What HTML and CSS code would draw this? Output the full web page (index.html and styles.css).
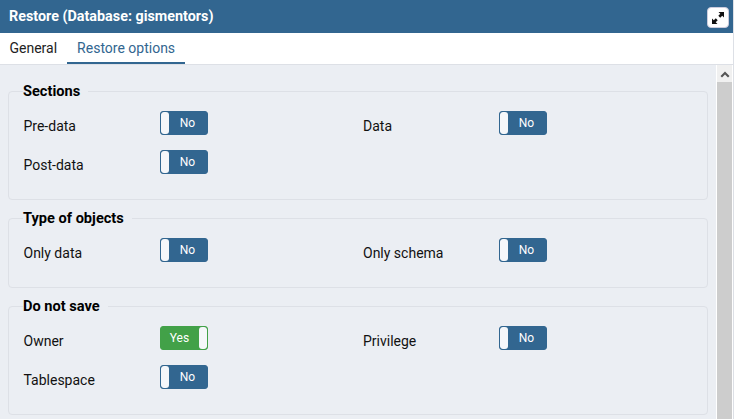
FILE: index.html
```html
<!DOCTYPE html>
<html lang="en">
<head>
<meta charset="utf-8">
<title>Restore</title>
<link rel="stylesheet" href="styles.css">
</head>
<body>
<div class="dialog">
  <header class="titlebar">
    <span class="title">Restore (Database: gismentors)</span>
    <button class="expand" aria-label="Maximize">
      <svg width="14" height="14" viewBox="0 0 14 14"><path d="M7.500 1H13V6.500L11.200 4.700 9.200 6.700 7.300 4.800 9.300 2.800zM6.500 13H1V7.500L2.800 9.300 4.800 7.300 6.700 9.200 4.700 11.200z" fill="#111"/></svg>
    </button>
  </header>
  <nav class="tabs">
    <span class="tab first">General</span>
    <span class="tab active">Restore options</span>
  </nav>
  <div class="body">
    <main class="content">
      <section class="group g1">
        <h2 class="legend">Sections</h2>
        <div class="grid">
          <span class="label">Pre-data</span><span class="toggle no"><i class="knob"></i><b>No</b></span>
          <span class="label">Data</span><span class="toggle no"><i class="knob"></i><b>No</b></span>
          <span class="label">Post-data</span><span class="toggle no"><i class="knob"></i><b>No</b></span>
        </div>
      </section>
      <section class="group g2">
        <h2 class="legend">Type of objects</h2>
        <div class="grid">
          <span class="label">Only data</span><span class="toggle no"><i class="knob"></i><b>No</b></span>
          <span class="label">Only schema</span><span class="toggle no"><i class="knob"></i><b>No</b></span>
        </div>
      </section>
      <section class="group g3">
        <h2 class="legend">Do not save</h2>
        <div class="grid">
          <span class="label">Owner</span><span class="toggle yes"><b>Yes</b><i class="knob"></i></span>
          <span class="label">Privilege</span><span class="toggle no"><i class="knob"></i><b>No</b></span>
          <span class="label">Tablespace</span><span class="toggle no"><i class="knob"></i><b>No</b></span>
        </div>
      </section>
    </main>
    <div class="scrollbar">
      <svg class="arrow" width="10" height="7" viewBox="0 0 10 7"><path d="M5 0.500 9.500 5 8 6.500 5 3.500 2 6.500 0.500 5z" fill="#555"/></svg>
      <div class="thumb"></div>
    </div>
  </div>
</div>
</body>
</html>
```
FILE: styles.css
```css
* { box-sizing: border-box; }
html, body { margin: 0; height: 100%; overflow: hidden; }
body { font-family: Roboto, "Liberation Sans", sans-serif; font-size: 14px; color: #111; background: #fff; }
.dialog { width: 734px; height: 419px; display: flex; flex-direction: column; border-right: 1px solid #dde0e6; }
.titlebar { height: 33px; flex: none; background: #326690; color: #fff; display: flex; align-items: center; justify-content: space-between; padding: 2px 4px 0 9px; }
.title { font-weight: 700; font-size: 14.350px; margin-top: -2px; }
.expand { width: 22px; height: 21px; padding: 0; border: 1px solid #ccd; border-radius: 4px; background: #fff; display: flex; align-items: center; justify-content: center; }
.tabs { height: 32px; flex: none; display: flex; background: #fff; border-bottom: 1px solid #dde0e6; }
.tab { padding: 7px 9.500px 0 10px; height: 31px; color: #222; }
.tab.first { padding-left: 9.500px; padding-right: 10px; }
.tab.active { color: #326690; border-bottom: 2px solid #326690; }
.body { flex: 1; min-height: 0; display: flex; background: #fff; }
.content { width: 716px; padding: 26px 8px 0 8px; display: flex; flex-direction: column; gap: 18px; overflow: hidden; background: #ebeef3; }
.group { flex: none; border: 1px solid #dde0e6; border-radius: 4px; padding: 0 14px; }
.g1 { height: 109px; }
.g2 { height: 70px; }
.g3 { height: 109px; }
.legend { margin: -9px 0 0 0; padding: 0 8px 0 0; width: fit-content; background: #ebeef3; font-size: 14.600px; line-height: 17px; font-weight: 700; color: #000; }
.grid { display: grid; grid-template-columns: 137px 202.500px 136.500px 48px; grid-auto-rows: 24px; row-gap: 15px; margin-top: 11px; align-items: center; }
.label { padding-top: 6px; padding-left: 0.500px; color: #111; }
.toggle { width: 48px; height: 24px; border-radius: 3px; display: flex; align-items: center; color: #fff; font-size: 12px; border: 1px solid; overflow: hidden; }
.toggle b { flex: 1; font-weight: 400; text-align: center; position: relative; left: -0.500px; }
.no { background: #326690; border-color: #326690; }
.yes { background: #42a148; border-color: #42a148; }
.knob { width: 8px; height: 22px; background: #f5f7fa; border-radius: 3px; flex: none; }
.scrollbar { width: 15px; margin-left: 1px; background: #f0f0f0; display: flex; flex-direction: column; align-items: center; }
.arrow { margin: 6px 0 4px; flex: none; }
.thumb { flex: 1; width: 100%; background: #cdcdcd; }
```
